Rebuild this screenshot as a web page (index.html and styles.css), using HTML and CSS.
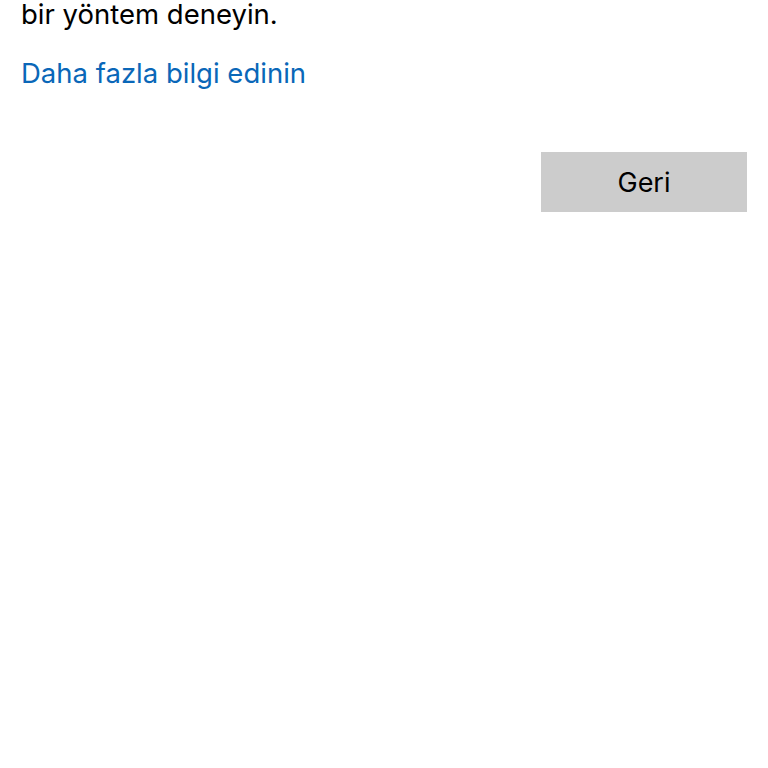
FILE: index.html
```html
<!DOCTYPE html>
<html lang="tr">
<head>
<meta charset="utf-8">
<link rel="stylesheet" href="styles.css">
</head>
<body>
<main class="page">
  <p class="msg">bir yöntem deneyin.</p>
  <a class="link" href="#">Daha fazla bilgi edinin</a>
  <div class="actions">
    <button class="btn">Geri</button>
  </div>
</main>
</body>
</html>
```
FILE: styles.css
```css
html, body {
  margin: 0;
  padding: 0;
  background: #ffffff;
}
.page {
  display: flex;
  flex-direction: column;
  padding: 0 21px 0 21px;
  font-family: Inter, "Noto Sans", sans-serif;
  font-size: 27.5px;
}
.msg {
  margin: -3px 0 0 0;
  line-height: 34px;
  color: #000;
}
.link {
  margin-top: 25px;
  line-height: 34px;
  color: #0a67b8;
  text-decoration: none;
  align-self: flex-start;
}
.actions {
  display: flex;
  justify-content: flex-end;
  margin-top: 62px;
}
.btn {
  width: 206px;
  height: 60px;
  border: none;
  background: #cccccc;
  font-family: Inter, "Noto Sans", sans-serif;
  font-size: 27px;
  color: #000;
  padding: 0;
}
```
